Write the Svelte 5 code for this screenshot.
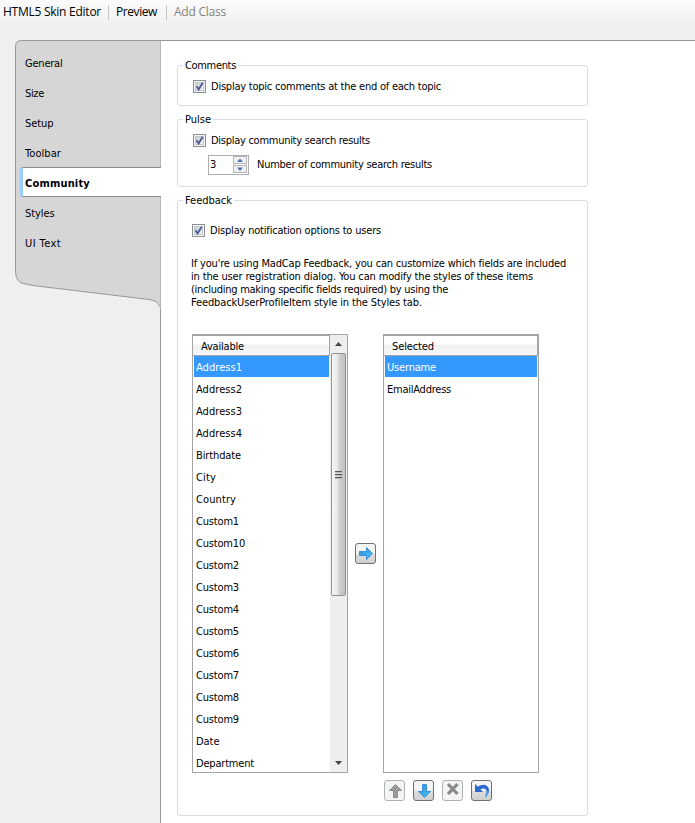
<script>
  const tabs = [['General', 37.5], ['Size', 19], ['Setup', 28.5], ['Toolbar', 36], ['Community', 65], ['Styles', 29.5], ['UI Text', 36]];
  const available = [
    ['Address1', 46], ['Address2', 46], ['Address3', 46], ['Address4', 46], ['Birthdate', 45],
    ['City', 20], ['Country', 40], ['Custom1', 43], ['Custom10', 49], ['Custom2', 43],
    ['Custom3', 43], ['Custom4', 43], ['Custom5', 43], ['Custom6', 43], ['Custom7', 43],
    ['Custom8', 43], ['Custom9', 43], ['Date', 23.5], ['Department', 58]
  ];
  const selected = [['Username', 49], ['EmailAddress', 64]];
  const intro = [
    ["If you're using MadCap Feedback, you can customize which fields are included", 375],
    ['in the user registration dialog. You can modify the styles of these items', 342],
    ['(including making specific fields required) by using the', 257],
    ['FeedbackUserProfileItem style in the Styles tab.', 231]
  ];

  // Tracks a label so that it fills the given advance width.
  function fit(node, width) {
    const natural = node.getBoundingClientRect().width;
    node.style.letterSpacing = `${(width - natural) / node.textContent.length}px`;
  }
</script>

{#snippet label(text, width)}<span class="label" use:fit={width}>{text}</span>{/snippet}

{#snippet check()}
  <svg class="check" width="13" height="13" viewBox="0 0 13 13">
    <rect x=".5" y=".5" width="12" height="12" fill="#f4f4f4" stroke="#8e8f8f" />
    <rect x="2.5" y="2.5" width="8" height="8" fill="url(#checkfill)" stroke="#c3c8ce" />
    <path d="M3.6 6.2 5.6 9.4 9.7 2.8" fill="none" stroke="#4a5f97" stroke-width="1.9" />
  </svg>
{/snippet}

{#snippet list(title, width, rows, scroll)}
  <div class="list">
    <div class="rows">
      <div class="head">{@render label(title, width)}</div>
      {#each rows as [name, w], i}
        <div class="row" class:picked={i === 0}>{@render label(name, w)}</div>
      {/each}
    </div>
    {#if scroll}
      <div class="scroll">
        <svg class="cap" width="17" height="18" viewBox="0 0 17 18"><path d="M5 11 8.5 7 12 11z" fill="#444" /></svg>
        <div class="thumb"><i></i><i></i><i></i></div>
        <svg class="cap" width="17" height="18" viewBox="0 0 17 18"><path d="M5 7 8.5 11 12 7z" fill="#444" /></svg>
      </div>
    {/if}
  </div>
{/snippet}

<div class="app">
  <svg class="defs" width="0" height="0">
    <defs>
      <linearGradient id="checkfill" x2="1" y2="1"><stop stop-color="#c5cbd3" /><stop offset="1" stop-color="#f6f6f6" /></linearGradient>
      <linearGradient id="blue" x2="1" y2="1"><stop stop-color="#2a8fd0" /><stop offset="1" stop-color="#4cc6ff" /></linearGradient>
    </defs>
  </svg>
  <header>
    <span class="tool first">{@render label('HTML5 Skin Editor', 98)}</span>
    <span class="tool second">{@render label('Preview', 41)}</span>
    <span class="tool off">{@render label('Add Class', 52)}</span>
  </header>
  <div class="body">
    <nav>
      <svg class="shape" width="161" height="270" viewBox="0 0 161 270">
        <path d="M160.500 .5H21.500Q15.500 .5 15.500 6.500V229C15.500 237 17 241.500 23 243.500L33 245.500 149 259.500Q158.500 261 159.500 266.500L160.500 270Z" fill="#d6d6d6" />
        <path d="M160.500 .5H21.500Q15.500 .5 15.500 6.500V229C15.500 237 17 241.500 23 243.500L33 245.500 149 259.500Q158.500 261 159.500 266.500" fill="none" stroke="#979797" />
      </svg>
      <div class="tabs">
        {#each tabs as [name, w]}
          <div class="tab" class:active={name === 'Community'}>{@render label(name, w)}</div>
        {/each}
      </div>
    </nav>
    <main>
      <fieldset class="comments">
        <legend>{@render label('Comments', 51)}</legend>
        <div class="option">{@render check()}{@render label('Display topic comments at the end of each topic', 230)}</div>
      </fieldset>
      <fieldset class="pulse">
        <legend>{@render label('Pulse', 26)}</legend>
        <div class="option">{@render check()}{@render label('Display community search results', 159)}</div>
        <div class="number">
          <div class="spin">
            {@render label('3', 6)}
            <svg width="15" height="18" viewBox="0 0 15 18">
              <rect x=".5" y=".5" width="13" height="7" fill="#f1f1f1" stroke="#b5b5b8" />
              <rect x=".5" y="9.500" width="13" height="7" fill="#f1f1f1" stroke="#b5b5b8" />
              <path d="M4 6 7 2.500 10 6zM4 11.500 7 15 10 11.500z" fill="#5470b0" />
            </svg>
          </div>
          <div class="caption">{@render label('Number of community search results', 175)}</div>
        </div>
      </fieldset>
      <fieldset class="feedback">
        <legend>{@render label('Feedback', 47)}</legend>
        <div class="option">{@render check()}{@render label('Display notification options to users', 171)}</div>
        <div class="intro">
          {#each intro as [line, w]}<div>{@render label(line, w)}</div>{/each}
        </div>
        <div class="lists">
          {@render list('Available', 43, available, true)}
          <button aria-label="Add field">
            <svg width="21" height="21" viewBox="0 0 21 21"><path d="M4.500 8.500H11.500V4.500L17.500 10.500 11.500 16.500V12.500H4.500Z" fill="url(#blue)" stroke="#3a8ee0" /></svg>
          </button>
          {@render list('Selected', 42, selected, false)}
        </div>
        <div class="actions">
          <button class="off" aria-label="Move up"><svg width="21" height="21" viewBox="0 0 21 21"><path d="M9.500 17.500V10.500H5.500L11.500 4.500 17.500 10.500H13.500V17.500Z" fill="#9b9b9b" stroke="#8c8c8c" /></svg></button>
          <button aria-label="Move down"><svg width="21" height="21" viewBox="0 0 21 21"><path d="M9.500 4.500H13.500V11.500H17.500L11.500 17.500 5.500 11.500H9.500Z" fill="url(#blue)" stroke="#3a8ee0" /></svg></button>
          <button class="off" aria-label="Remove"><svg width="21" height="21" viewBox="0 0 21 21"><path d="M6 4 15.500 14M15.500 4 6 14" fill="none" stroke="#888" stroke-width="3.200" /></svg></button>
          <button aria-label="Undo"><svg width="21" height="21" viewBox="0 0 21 21"><path d="M4 4V12H12L9.500 9.200C13.500 7.500 16 9.500 15.500 12.500L14 17C18.500 13.500 19 9 16.500 6.500C14 4 10 4.500 7 6.700Z" fill="#2d68cc" /><path d="M17 11Q17 14 14.500 17" fill="none" stroke="#48a5f5" stroke-width="1.500" /></svg></button>
        </div>
      </fieldset>
    </main>
  </div>
</div>

<style>
  .app { width: 695px; height: 823px; overflow: hidden; background: #efefef; color: #000; font: 11px/13px 'DejaVu Sans Condensed', 'DejaVu Sans', sans-serif; }
  .defs { position: absolute; }
  .label { white-space: pre; }
  header { height: 40px; display: flex; align-items: flex-start; background: linear-gradient(#fcfcfc, #efefef 28px); font: 12px/24px 'Open Sans', 'Noto Sans', sans-serif; }
  .tool { height: 24px; }
  .first { width: 105px; padding-left: 3px; }
  .second, .tool.off { position: relative; padding-left: 8px; }
  .second { width: 50px; }
  .tool.off { color: #838383; }
  .second::before, .tool.off::before { content: ''; position: absolute; left: 0; top: 5px; width: 1px; height: 15px; background: #c5c5c5; }
  .body { display: flex; height: 783px; }
  nav { position: relative; width: 160px; border-right: 1px solid #979797; }
  .shape { position: absolute; left: 0; top: 0; }
  .tabs { position: relative; padding: 7px 0 0 20px; }
  .tab { height: 30px; line-height: 33px; padding-left: 5px; }
  .active { box-sizing: border-box; margin-right: -1px; line-height: 31px; padding-left: 2px; background: #fff; border: solid #8c8c8c; border-width: 1px 0; border-left: 3px solid #99ccff; border-radius: 3px 0 0 3px; font-weight: bold; }
  main { flex: 1; padding: 18px 0 0 16px; background: #fff; border-top: 1px solid #979797; }
  fieldset { box-sizing: border-box; width: 411px; min-width: 0; margin: 0 0 7px; padding: 0; border: 1px solid #d5dfe8; border-radius: 3px; }
  legend { height: 13px; line-height: 14px; margin-left: 5px; padding: 0 2px; }
  .comments { height: 47px; }
  .pulse { height: 74px; }
  .feedback { height: 622px; }
  .option { display: flex; align-items: center; gap: 5px; height: 17px; padding-left: 15px; margin-top: 6px; }
  .check { flex: none; }
  .number { display: flex; align-items: center; gap: 8px; margin: 6px 0 0 30px; }
  .caption { padding-bottom: 2px; }
  .spin { box-sizing: border-box; display: flex; justify-content: space-between; line-height: 17px; width: 41px; height: 20px; border: 1px solid #abadb3; padding: 0 0 0 1px; }
  .feedback .option { padding-left: 14px; margin-top: 15px; }
  .intro { margin: 18px 0 0 13px; }
  .intro div { height: 13px; }
  .lists { display: flex; align-items: center; margin: 25px 0 0 14px; gap: 7px; }
  .list { box-sizing: border-box; display: flex; width: 156px; height: 439px; border: 1px solid #a5a5a8; }
  .rows { flex: 1; }
  .head { box-sizing: border-box; height: 21px; line-height: 21px; padding-left: 8px; border: solid #a2a4a8; border-width: 1px 1px 1px 0; background: linear-gradient(#fff 40%, #f1f2f4 50%, #f5f6f7); }
  .row { height: 22px; line-height: 24px; padding-left: 2px; margin-left: 1px; }
  .picked { height: 21px; margin: 0 1px 1px; background: #3399ff; color: #fff; }
  .scroll { width: 17px; display: flex; flex-direction: column; background: #eee; }
  .cap { flex: none; }
  .scroll .cap:last-child { margin-top: auto; }
  .thumb { box-sizing: border-box; display: flex; flex-direction: column; justify-content: center; align-items: center; gap: 1px; width: 15px; height: 243px; margin-left: 1px; border: 1px solid #929292; border-radius: 2px; background: linear-gradient(90deg, #f8f8f8, #e6e6e8 45%, #cfcfd3 55%, #bfc0c5); }
  .thumb i { width: 7px; height: 2px; background: linear-gradient(#555 50%, #bbb 50%); }
  button { box-sizing: border-box; flex: none; width: 21px; height: 21px; padding: 0; border: 1px solid #707070; border-radius: 3px; background: linear-gradient(#f4f4f4 48%, #dedede 52%, #d0d0d0); }
  button svg { display: block; margin: -1px; }
  button.off { border-color: #adb2b5; background: #f4f4f4; }
  .actions { display: flex; gap: 8px; margin: 7px 0 0 206px; }
</style>
